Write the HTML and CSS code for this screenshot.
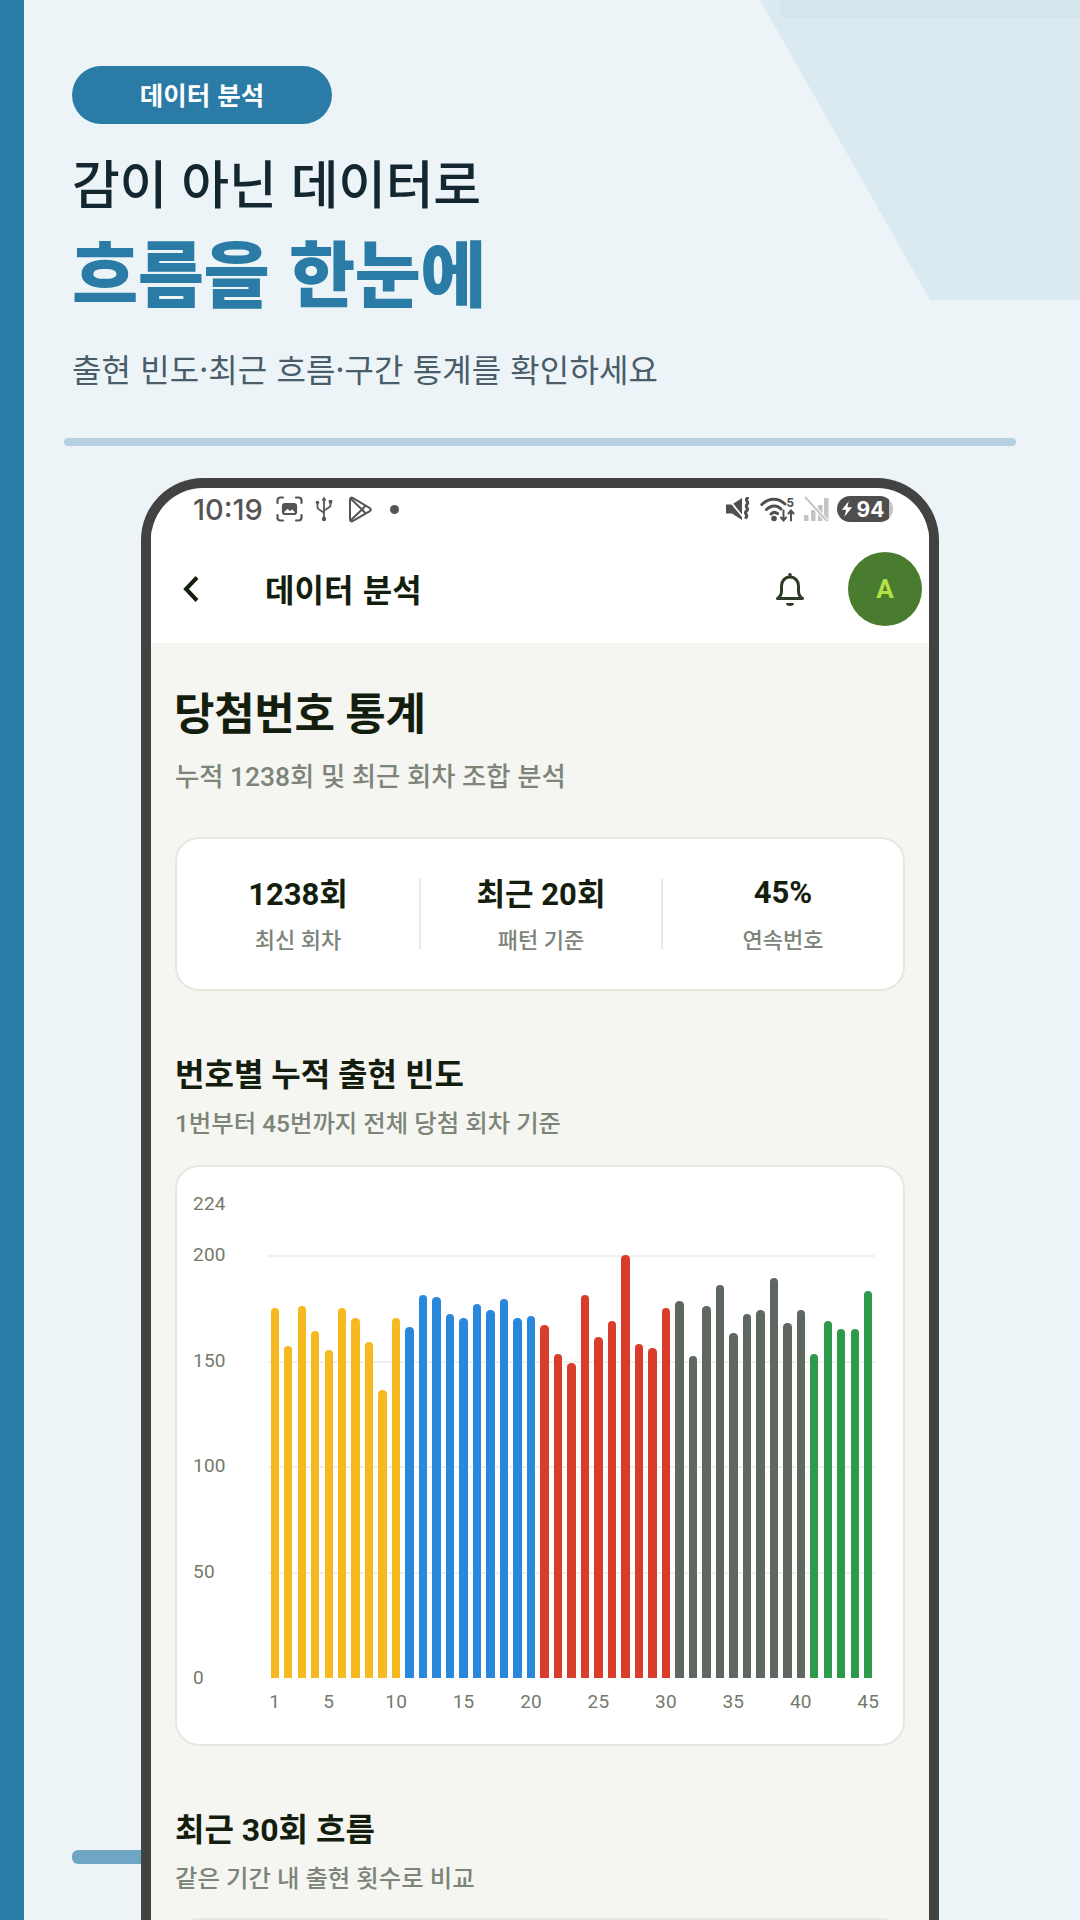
FILE: index.html
```html
<!DOCTYPE html>
<html lang="ko">
<head>
    <meta charset="UTF-8">
    <meta name="viewport" content="width=device-width, initial-scale=1.0">
    <title>데이터 분석</title>
    <link rel="stylesheet" href="styles.css">
</head>
<body>
    <div class="page">
        <div class="deco-shape"></div>
        <div class="deco-band"></div>
        <div class="deco-tab"></div>

        <header class="hero">
            <div class="pill">데이터 분석</div>
            <h1 class="hero-line">감이 아닌 데이터로</h1>
            <div class="hero-big">흐름을 한눈에</div>
            <p class="hero-sub">출현 빈도·최근 흐름·구간 통계를 확인하세요</p>
        </header>
        <div class="rule"></div>

        <div class="phone">
            <div class="status">
                <span class="clock">10:19</span>
                <svg class="ic-shot" viewBox="0 0 27 26" fill="none" stroke="#555" stroke-width="2.2" stroke-linecap="round">
                    <path d="M1.5 7V4.5a3 3 0 0 1 3-3H7M20 1.5h2.500a3 3 0 0 1 3 3V7M25.500 19v2.500a3 3 0 0 1-3 3H20M7 24.500H4.500a3 3 0 0 1-3-3V19"/>
                    <rect x="7" y="8" width="13" height="10" rx="2"/>
                    <path d="M8 16l3.500-3 2.500 2 2-1.500 3 2.500V9H8z" fill="#555" stroke="none"/>
                </svg>
                <svg class="ic-usb" viewBox="0 0 18 26" fill="none" stroke="#555" stroke-width="1.800" stroke-linecap="round">
                    <path d="M9 3v20M2.500 8v3.500c0 2.500 6.500 4 6.500 6M15.500 7v2.500c0 2.500-6.500 3.500-6.500 6"/>
                    <path d="M9 0.500l2.500 4h-5z" fill="#555" stroke="none"/>
                    <circle cx="9" cy="23" r="2.200" fill="#555" stroke="none"/>
                    <circle cx="2.500" cy="6.500" r="1.800" fill="#555" stroke="none"/>
                    <rect x="13.800" y="4" width="3.400" height="3.400" fill="#555" stroke="none"/>
                </svg>
                <svg class="ic-play" viewBox="0 0 24 27" fill="none" stroke="#555" stroke-width="2" stroke-linejoin="round">
                    <path d="M2 3.500c0-1.500 1.300-2.300 2.600-1.600L21.500 11.800c1.800 1 1.800 2.500 0 3.500L4.600 25.100C3.300 25.800 2 25 2 23.500z"/>
                    <path d="M2.500 2.500L14 13.500 2.500 24.500M14 13.500l3.500-3.800M14 13.500l3.500 3.800"/>
                </svg>
                <span class="dot"></span>
                <span class="status-gap"></span>
                <svg class="ic-mute" viewBox="0 0 26 24" fill="none">
                    <path d="M0 7.500h6L16 1v22L6 16.500H0z" fill="#505050"/>
                    <path d="M1 0.500l16 19.500" stroke="#fff" stroke-width="1.800"/>
                    <path d="M21.500 1c-3.500 2.500 2.500 4-.5 6.500s3 4-.5 6.500 2.500 4-.5 6.500" stroke="#505050" stroke-width="3" stroke-linecap="round"/>
                </svg>
                <svg class="ic-wifi" viewBox="0 0 36 26" fill="none" stroke="#505050" stroke-width="3" stroke-linecap="round">
                    <path d="M1.800 8.500C9 1.500 18 1.500 25 8M6.500 13.500c4.500-4.500 10.500-4.500 14.500-.5M11 18c2-2 4.500-2 6.500-.5"/>
                    <circle cx="14" cy="22.500" r="2.800" fill="#505050" stroke="none"/>
                    <path d="M23.500 14.500v10M21 21.500l2.500 3 2.500-3M31 24.500v-10M28.500 17.500l2.500-3 2.500 3" stroke-width="2"/>
                    <text x="26.500" y="10.500" class="wifi-five">5</text>
                </svg>
                <svg class="ic-signal" viewBox="0 0 26 26" fill="none">
                    <rect x="1" y="19" width="4.500" height="6" fill="#c4c4c4"/>
                    <rect x="8" y="14" width="4.500" height="11" fill="#c4c4c4"/>
                    <rect x="15" y="9" width="4.500" height="16" fill="#c4c4c4"/>
                    <rect x="21" y="2" width="4.500" height="23" fill="#c4c4c4"/>
                    <path d="M2 1l22 24" stroke="#fff" stroke-width="4"/>
                    <path d="M2 1l22 24" stroke="#c4c4c4" stroke-width="2"/>
                </svg>
                <div class="battery">
                    <svg class="ic-bolt" viewBox="0 0 14 18"><path d="M9 0L1 10h5l-2 8 9-11H7.500z" fill="#fff"/></svg>
                    <span>94</span>
                </div>
            </div>

            <div class="appbar">
                <svg class="ic-back" viewBox="0 0 18 28" fill="none" stroke="#141e0e" stroke-width="4"><path d="M15 2.500L4 14l11 11.500"/></svg>
                <div class="appbar-title">데이터 분석</div>
                <svg class="ic-bell" viewBox="0 0 28 36" fill="none" stroke="#2e3d28" stroke-width="3" stroke-linejoin="round">
                    <path d="M1.500 27.500c3-2 4-4 4-7.500v-5c0-5 3.500-9 8.500-9s8.500 4 8.500 9v5c0 3.500 1 5.500 4 7.500z"/>
                    <circle cx="14" cy="3.800" r="1.800" fill="#2e3d28" stroke="none"/>
                    <path d="M10 32h8a4 3 0 0 1-8 0z" fill="#2e3d28" stroke="none"/>
                </svg>
                <div class="avatar">A</div>
            </div>

            <main class="content">
                <h2 class="page-title">당첨번호 통계</h2>
                <p class="page-sub">누적 1238회 및 최근 회차 조합 분석</p>

                <section class="card stats">
                    <div class="stat">
                        <div class="stat-value">1238회</div>
                        <div class="stat-label">최신 회차</div>
                    </div>
                    <div class="stat">
                        <div class="stat-value">최근 20회</div>
                        <div class="stat-label">패턴 기준</div>
                    </div>
                    <div class="stat">
                        <div class="stat-value latin">45%</div>
                        <div class="stat-label">연속번호</div>
                    </div>
                </section>

                <h3 class="section-title">번호별 누적 출현 빈도</h3>
                <p class="section-sub">1번부터 45번까지 전체 당첨 회차 기준</p>

                <section class="card chart">
                    <div class="y-axis">
                        <span class="y-max">224</span>
                        <span>200</span>
                        <span>150</span>
                        <span>100</span>
                        <span>50</span>
                        <span>0</span>
                    </div>
                    <div class="chart-main">
                        <div class="plot">
                            <div class="gridlines"><i></i><i></i><i></i><i></i></div>
                            <div class="bars">
                                <div class="bar yellow" style="height:87.5%"></div>
                                <div class="bar yellow" style="height:78.5%"></div>
                                <div class="bar yellow" style="height:88%"></div>
                                <div class="bar yellow" style="height:82%"></div>
                                <div class="bar yellow" style="height:77.5%"></div>
                                <div class="bar yellow" style="height:87.5%"></div>
                                <div class="bar yellow" style="height:85%"></div>
                                <div class="bar yellow" style="height:79.5%"></div>
                                <div class="bar yellow" style="height:68%"></div>
                                <div class="bar yellow" style="height:85%"></div>
                                <div class="bar blue" style="height:83%"></div>
                                <div class="bar blue" style="height:90.5%"></div>
                                <div class="bar blue" style="height:90%"></div>
                                <div class="bar blue" style="height:86%"></div>
                                <div class="bar blue" style="height:85%"></div>
                                <div class="bar blue" style="height:88.5%"></div>
                                <div class="bar blue" style="height:87%"></div>
                                <div class="bar blue" style="height:89.5%"></div>
                                <div class="bar blue" style="height:85%"></div>
                                <div class="bar blue" style="height:85.5%"></div>
                                <div class="bar red" style="height:83.5%"></div>
                                <div class="bar red" style="height:76.5%"></div>
                                <div class="bar red" style="height:74.5%"></div>
                                <div class="bar red" style="height:90.5%"></div>
                                <div class="bar red" style="height:80.5%"></div>
                                <div class="bar red" style="height:84.5%"></div>
                                <div class="bar red" style="height:100%"></div>
                                <div class="bar red" style="height:79%"></div>
                                <div class="bar red" style="height:78%"></div>
                                <div class="bar red" style="height:87.5%"></div>
                                <div class="bar gray" style="height:89%"></div>
                                <div class="bar gray" style="height:76%"></div>
                                <div class="bar gray" style="height:88%"></div>
                                <div class="bar gray" style="height:93%"></div>
                                <div class="bar gray" style="height:81.5%"></div>
                                <div class="bar gray" style="height:86%"></div>
                                <div class="bar gray" style="height:87%"></div>
                                <div class="bar gray" style="height:94.5%"></div>
                                <div class="bar gray" style="height:84%"></div>
                                <div class="bar gray" style="height:87%"></div>
                                <div class="bar green" style="height:76.5%"></div>
                                <div class="bar green" style="height:84.5%"></div>
                                <div class="bar green" style="height:82.5%"></div>
                                <div class="bar green" style="height:82.5%"></div>
                                <div class="bar green" style="height:91.5%"></div>
                            </div>
                        </div>
                        <div class="x-axis">
                            <span>1</span><b class="skip3"></b><span>5</span><b class="skip4"></b><span>10</span><b class="skip4"></b><span>15</span><b class="skip4"></b><span>20</span><b class="skip4"></b><span>25</span><b class="skip4"></b><span>30</span><b class="skip4"></b><span>35</span><b class="skip4"></b><span>40</span><b class="skip4"></b><span>45</span>
                        </div>
                    </div>
                </section>

                <h3 class="section-title">최근 30회 흐름</h3>
                <p class="section-sub">같은 기간 내 출현 횟수로 비교</p>
                <section class="card next-card"></section>
            </main>
        </div>
    </div>
</body>
</html>
```

FILE: styles.css
```css
* {
    box-sizing: border-box;
}
body {
    margin: 0;
    padding: 0;
    background-color: #ecf4f8;
    font-family: Roboto, "Noto Sans CJK KR", sans-serif;
}
h1, h2, h3, p {
    margin: 0;
    font-weight: normal;
}
.page {
    position: relative;
    width: 1080px;
    height: 1920px;
    overflow: hidden;
    border-left: 24px solid #2a7ba6;
    background-color: #ecf4f8;
}

/* background shapes */
.deco-shape {
    position: absolute;
    top: 0;
    left: 736px;
    width: 320px;
    height: 300px;
    background-color: #dbe9f1;
    clip-path: polygon(0 0, 100% 0, 100% 100%, 170px 100%);
}
.deco-band {
    position: absolute;
    top: 0;
    left: 756px;
    width: 300px;
    height: 18px;
    background-color: #d5e5ee;
}
.deco-tab {
    position: absolute;
    top: 1850px;
    left: 48px;
    width: 120px;
    height: 14px;
    border-radius: 6px;
    background-color: #6ea6c3;
}

/* hero */
.hero {
    position: relative;
    padding: 66px 0 0 48px;
    font-family: "Noto Sans CJK KR", sans-serif;
}
.pill {
    width: 260px;
    height: 58px;
    line-height: 56px;
    border-radius: 29px;
    background-color: #2a7ba6;
    color: #fff;
    font-size: 25.5px;
    font-weight: 700;
    text-align: center;
}
.hero-line {
    margin-top: 22px;
    height: 72px;
    line-height: 72px;
    font-size: 52px;
    font-weight: 500;
    letter-spacing: -0.3px;
    color: #14262f;
}
.hero-big {
    margin-top: 6px;
    height: 92px;
    line-height: 92px;
    font-size: 72px;
    font-weight: 900;
    letter-spacing: -0.5px;
    color: #2a7ba6;
}
.hero-sub {
    margin-top: 29px;
    height: 46px;
    line-height: 46px;
    font-size: 32px;
    letter-spacing: 0.1px;
    color: #4a5c6a;
}
.rule {
    position: relative;
    width: 952px;
    height: 8px;
    margin: 47px 0 0 40px;
    border-radius: 4px;
    background-color: #b5d0e0;
}

/* phone frame */
.phone {
    position: relative;
    width: 798px;
    height: 1600px;
    margin: 32px 0 0 117px;
    border: 10px solid #424242;
    border-bottom: 0;
    border-radius: 62px 62px 0 0;
    background-color: #fff;
    overflow: hidden;
}
.status {
    display: flex;
    align-items: center;
    height: 42px;
    padding: 0 36px 0 42px;
}
.clock {
    width: 83px;
    font-family: Inter, sans-serif;
    font-size: 29px;
    font-weight: 500;
    color: #555;
}
.ic-shot {
    width: 27px;
    height: 26px;
}
.ic-usb {
    width: 18px;
    height: 26px;
    margin-left: 12px;
}
.ic-play {
    width: 24px;
    height: 27px;
    margin-left: 15px;
}
.dot {
    width: 9px;
    height: 9px;
    margin-left: 18px;
    border-radius: 50%;
    background-color: #555;
}
.status-gap {
    flex: 1;
}
.ic-mute {
    width: 26px;
    height: 24px;
}
.ic-wifi {
    width: 36px;
    height: 26px;
    margin-left: 8px;
}
.wifi-five {
    font-family: Roboto, sans-serif;
    font-size: 13px;
    font-weight: 700;
    fill: #505050;
    stroke: none;
}
.ic-signal {
    width: 26px;
    height: 26px;
    margin-left: 7px;
}
.battery {
    display: flex;
    align-items: center;
    justify-content: center;
    gap: 4px;
    width: 56px;
    height: 26px;
    margin-left: 8px;
    padding-right: 5px;
    border-radius: 13px;
    background: linear-gradient(90deg, #4e4e4e 92%, #c4c4c4 92%);
    color: #fff;
    font-family: Inter, sans-serif;
    font-size: 21px;
    font-weight: 700;
}
.ic-bolt {
    width: 12px;
    height: 16px;
}

/* app bar */
.appbar {
    display: flex;
    align-items: center;
    height: 113px;
    padding: 5px 7px 0 31px;
    background-color: #fff;
}
.ic-back {
    width: 18px;
    height: 28px;
}
.appbar-title {
    flex: 1;
    margin-left: 65px;
    padding-bottom: 3px;
    font-family: "Noto Sans CJK KR", sans-serif;
    font-size: 32px;
    font-weight: 700;
    letter-spacing: 0.1px;
    color: #141e0e;
}
.ic-bell {
    width: 28px;
    height: 36px;
    margin-right: 44px;
}
.avatar {
    width: 74px;
    height: 74px;
    line-height: 74px;
    border-radius: 50%;
    background-color: #4a7c2f;
    color: #b5e048;
    font-size: 26px;
    font-weight: 700;
    text-align: center;
}

/* content */
.content {
    height: 1290px;
    padding: 42px 24px 0 24px;
    background-color: #f5f6f2;
    color: #141e0e;
}
.page-title {
    height: 60px;
    line-height: 60px;
    margin-left: -1px;
    font-size: 44px;
    font-weight: 700;
    letter-spacing: -0.3px;
}
.page-sub {
    height: 36px;
    line-height: 36px;
    margin-top: 14px;
    font-size: 26.4px;
    font-weight: 500;
    color: #7d8478;
}
.card {
    border: 2px solid #e6e8e0;
    border-radius: 24px;
    background-color: #fff;
}
.stats {
    display: grid;
    grid-template-columns: repeat(3, 1fr);
    height: 154px;
    margin-top: 42px;
    padding-top: 40px;
}
.stat {
    height: 70px;
    text-align: center;
    border-left: 2px solid #e8e9e3;
}
.stat:first-child {
    border-left: 0;
}
.stat-value {
    line-height: 32px;
    font-size: 31px;
    font-weight: 700;
}
.stat-value.latin {
    height: 32px;
    line-height: 28px;
}
.stat-label {
    margin-top: 18px;
    line-height: 24px;
    font-size: 22px;
    font-weight: 500;
    color: #7d8478;
}
.section-title {
    height: 44px;
    line-height: 44px;
    margin-top: 62px;
    font-size: 32px;
    font-weight: 700;
}
.section-sub {
    height: 34px;
    line-height: 34px;
    margin-top: 10px;
    font-size: 24.4px;
    font-weight: 500;
    color: #7d8478;
}

/* chart */
.chart {
    display: flex;
    height: 581px;
    margin-top: 24px;
    padding: 27px 28px 0 16px;
}
.y-axis {
    display: flex;
    flex-direction: column;
    width: 75px;
    font-size: 19px;
    letter-spacing: 0.2px;
    line-height: 20px;
    color: #737a6d;
}
.y-axis span + span {
    margin-top: 85.7px;
}
.y-axis .y-max + span {
    margin-top: 31px;
}
.chart-main {
    flex: 1;
    margin-top: 61px;
}
.plot {
    position: relative;
    height: 422.5px;
}
.gridlines {
    position: absolute;
    top: 0;
    left: 0;
    right: 0;
    bottom: 0;
    display: flex;
    flex-direction: column;
}
.gridlines i {
    flex: 1;
    border-top: 2px solid #f0f1ee;
}
.bars {
    position: relative;
    display: grid;
    grid-template-columns: repeat(45, minmax(0, 1fr));
    align-items: end;
    height: 100%;
}
.bar {
    width: 8.4px;
    justify-self: center;
    border-radius: 4.2px 4.2px 0 0;
}
.yellow {
    background-color: #f6b91f;
}
.blue {
    background-color: #2a88dc;
}
.red {
    background-color: #da3c2b;
}
.gray {
    background-color: #5f6860;
}
.green {
    background-color: #2e9a4c;
}
.x-axis {
    display: grid;
    grid-template-columns: repeat(45, minmax(0, 1fr));
    margin-top: 12px;
    font-size: 19px;
    letter-spacing: 0.2px;
    line-height: 24px;
    color: #737a6d;
}
.x-axis span {
    justify-self: center;
}
.skip3 {
    grid-column: span 3;
}
.skip4 {
    grid-column: span 4;
}
.next-card {
    height: 300px;
    margin-top: 22px;
}
```
